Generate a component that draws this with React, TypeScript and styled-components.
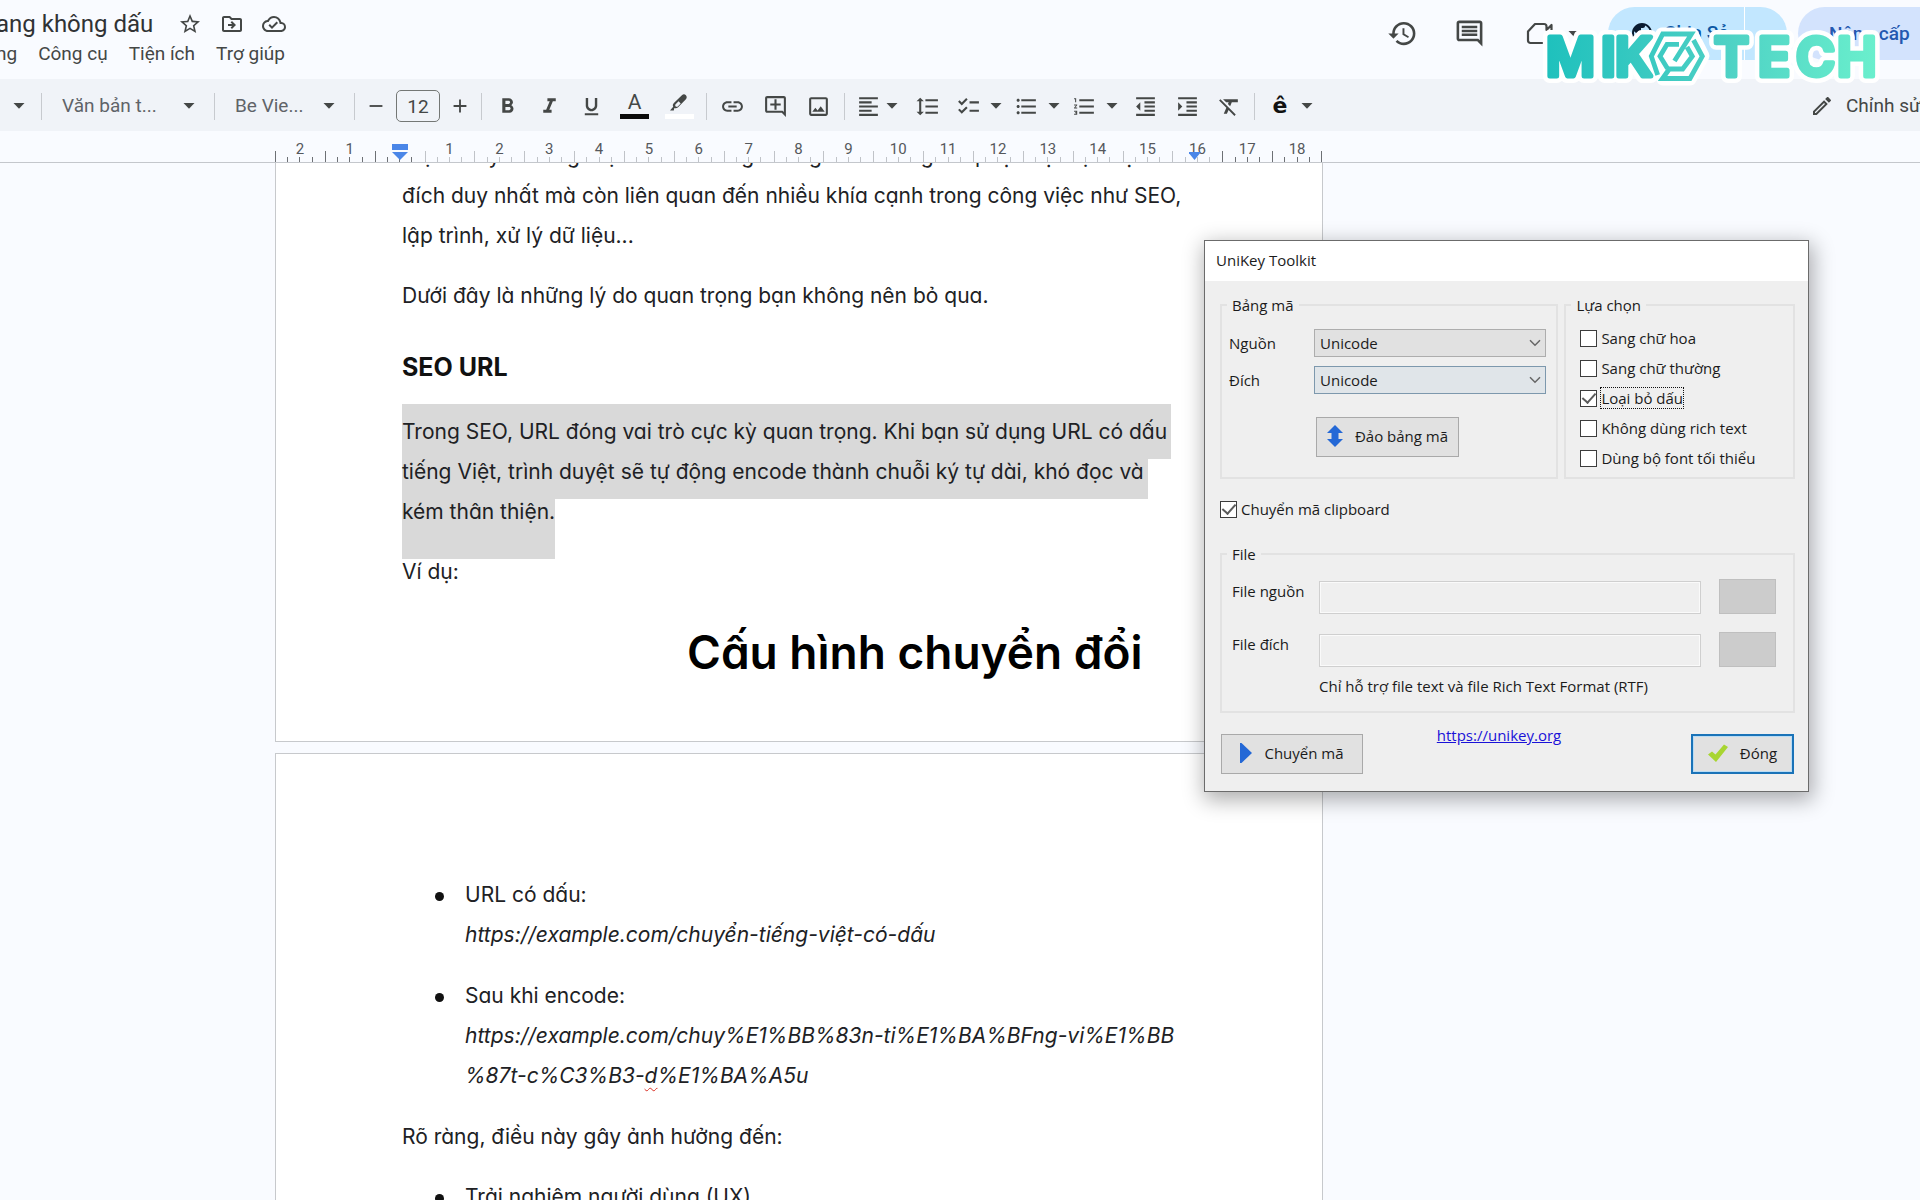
import React from 'react';
import styled, { createGlobalStyle } from 'styled-components';
import {
  MdAdd, MdChecklist, MdFormatAlignLeft, MdFormatBold, MdFormatClear, MdFormatIndentDecrease,
  MdFormatIndentIncrease, MdFormatItalic, MdFormatLineSpacing, MdFormatListBulleted,
  MdFormatListNumbered, MdFormatUnderlined, MdHistory, MdLink, MdOutlineAddComment,
  MdOutlineCloudDone, MdOutlineDriveFileMove, MdOutlineEdit, MdOutlineImage,
  MdOutlineInsertComment, MdPublic, MdRemove, MdStarBorder,
} from 'react-icons/md';

const uiFont = `Roboto, "Noto Sans", sans-serif`;
const docFont = `Inter, "Noto Sans", sans-serif`;
const dialogFont = `"Open Sans", "Noto Sans", sans-serif`;

const GlobalStyle = createGlobalStyle`
  * { box-sizing: border-box; }
  body { margin: 0; background: #f9fbff; }
  button, input, select { font: inherit; color: inherit; margin: 0; }
  button { cursor: pointer; }
  svg { flex: none; }
`;

const Shell = styled.div`
  position: relative;
  height: 100vh;
  overflow: hidden;
  display: flex;
  flex-direction: column;
  background: #f9fbff;
  color: #444746;
  font-family: ${uiFont};
`;

/* ---------- header ---------- */

const Header = styled.header`
  flex: none;
  height: 79px;
  display: flex;
  justify-content: space-between;
  overflow: hidden;
`;

const TitleBlock = styled.div`
  padding-top: 7px;
  margin-left: -4px;
`;

const TitleRow = styled.div`
  display: flex;
  align-items: center;
  height: 34px;
`;

const DocTitle = styled.h1`
  margin: 0 16px 0 0;
  font-size: 24px;
  line-height: 32px;
  font-weight: 400;
  color: #303234;
`;

const IconButton = styled.button<{ $w?: number }>`
  flex: none;
  width: ${(p) => p.$w ?? 42}px;
  height: 36px;
  padding: 0;
  border: 0;
  background: none;
  display: inline-flex;
  align-items: center;
  justify-content: center;
`;

const MenuBar = styled.nav`
  display: flex;
  gap: 21px;
`;

const MenuButton = styled.button`
  padding: 0;
  border: 0;
  background: none;
  font-size: 19px;
  line-height: 26px;
`;

const HeaderActions = styled.div`
  display: flex;
  align-items: flex-start;
  padding-top: 7px;
`;

const ActionIcons = styled.div`
  display: flex;
  align-items: center;
  height: 53px;
  gap: 25px;
  margin-right: 27px;
`;

const SharePill = styled.div`
  display: flex;
  width: 179px;
  height: 53px;
  margin-right: 11px;
  border-radius: 27px;
  overflow: hidden;
  background: #c2e7ff;
  color: #0b57a4;
`;

const ShareButton = styled.button`
  display: flex;
  align-items: center;
  gap: 10px;
  width: 137px;
  padding: 0 0 2px 22px;
  border: 0;
  border-right: 1px solid #fff;
  background: none;
  font-size: 19px;
  font-weight: 500;
`;

const ShareMore = styled.button`
  flex: 1;
  border: 0;
  background: none;
`;

const UpgradeButton = styled.button`
  width: 122px;
  height: 53px;
  padding: 0 0 0 31px;
  border: 0;
  border-radius: 27px 0 0 27px;
  background: #d3e3fd;
  color: #2458b0;
  font-size: 19px;
  font-weight: 500;
  text-align: left;
  white-space: nowrap;
`;

const Brand = styled.svg`
  position: absolute;
  top: 22px;
  right: 34px;
  width: 346px;
  height: 70px;
`;

/* ---------- toolbar ---------- */

const Toolbar = styled.div`
  flex: none;
  height: 52px;
  display: flex;
  align-items: center;
  padding-top: 2px;
  background: #f0f3f8;
`;

const Divider = styled.span`
  flex: none;
  width: 1px;
  height: 27px;
  margin: 0 4px;
  background: #c7cacf;
`;

const SelectWrap = styled.label<{ $w: number }>`
  flex: none;
  width: ${(p) => p.$w}px;
  display: flex;
  align-items: center;
  justify-content: space-between;
  padding: 0 15px 0 16px;
`;

const ToolSelect = styled.select`
  appearance: none;
  flex: 1;
  min-width: 0;
  padding: 0;
  border: 0;
  background: none;
  font-size: 19px;
  line-height: 28px;
  color: #5f6368;
`;

const SizeInput = styled.input`
  width: 44px;
  height: 32px;
  margin: 0 3px;
  padding: 0;
  border: 1px solid #747775;
  border-radius: 5px;
  background: none;
  text-align: center;
  font-size: 19px;
`;

const DropButton = styled(IconButton)`
  width: 58px;
  gap: 9px;
`;

const MeetButton = styled(DropButton)`
  margin-left: 8px;
`;

const AlignButton = styled(DropButton)`
  width: 55px;
  gap: 5px;
`;

const Swatch = styled(IconButton)`
  flex-direction: column;
  gap: 2px;
  font-size: 21px;
  line-height: 19px;
`;

const SwatchBar = styled.span<{ $color: string }>`
  width: 29px;
  height: 5px;
  background: ${(p) => p.$color};
`;

const ImeButton = styled(DropButton)`
  margin-left: 5px;
  gap: 14px;
  font: 700 22px/24px "DejaVu Sans", sans-serif;
  color: #111;
`;

const ModeButton = styled.button`
  display: flex;
  align-items: center;
  gap: 12px;
  width: 110px;
  margin-left: auto;
  padding: 0;
  border: 0;
  background: none;
  font-size: 19px;
  line-height: 28px;
  white-space: nowrap;
  overflow: hidden;
`;

/* ---------- ruler ---------- */

const RulerRow = styled.div`
  flex: none;
  height: 32px;
  padding-left: 275px;
  border-bottom: 1px solid #c4c7cc;
`;

const Ruler = styled.div`
  display: flex;
  width: 1047px;
  height: 31px;
  background: linear-gradient(#6d7074, #6d7074) 100% 100% / 1px 11px no-repeat;
`;

const RulerCell = styled.div<{ $outer: boolean }>`
  position: relative;
  flex: 1;
  padding-top: 9px;
  text-align: center;
  font-size: 15px;
  line-height: 18px;
  color: #55585c;
  --tick: ${(p) => (p.$outer ? '#6d7074' : '#c0c3c8')};
  background:
    linear-gradient(var(--tick), var(--tick)) 0 100% / 1px 11px no-repeat,
    linear-gradient(var(--tick), var(--tick)) 25% 100% / 1px 5px no-repeat,
    linear-gradient(var(--tick), var(--tick)) 50% 100% / 1px 5px no-repeat,
    linear-gradient(var(--tick), var(--tick)) 75% 100% / 1px 5px no-repeat;
`;

const Marker = styled.svg`
  position: absolute;
  left: 50%;
  bottom: 2px;
  margin-left: -8px;
  width: 16px;
  height: 16px;
`;

/* ---------- document ---------- */

const Viewport = styled.main`
  flex: 1;
  min-height: 0;
  overflow: hidden;
  padding-left: 275px;
  font-family: ${docFont};
  font-feature-settings: "cv11";
  font-size: 21px;
  line-height: 40px;
  color: #202124;
`;

const Page = styled.article`
  width: 1048px;
  border: 1px solid #c7c9cc;
  background: #fff;
  padding: 0 126px;
`;

const FirstPage = styled(Page)`
  height: 606px;
  margin-top: -27px;
  border-top: 0;
`;

const NextPage = styled(Page)`
  height: 1480px;
  margin-top: 11px;
  padding-top: 121px;
`;

const Paragraph = styled.p`
  margin: 0 0 20px;
`;

const Line = styled.span`
  display: block;
  white-space: nowrap;
`;

const Heading = styled.h2`
  margin: 31px 0 24px;
  font-size: 25px;
  line-height: 40px;
  font-weight: 700;
  color: #111;
`;

const Selected = styled.div`
  display: flex;
  flex-direction: column;
  align-items: flex-start;
`;

const SelectedLine = styled.span<{ $edge?: 'first' | 'last' }>`
  white-space: nowrap;
  background: #d9d9d9;
  box-shadow: 0 7px 0 #d9d9d9;
  padding: ${(p) => (p.$edge === 'first' ? '8px 4px 0 0' : p.$edge === 'last' ? '0 0 20px' : '0 4px 0 0')};
  margin-top: ${(p) => (p.$edge === 'first' ? '-7px' : '0')};
`;

const Bullets = styled.ul`
  margin: 0;
  padding: 0 0 0 63px;
  list-style: none;
`;

const Bullet = styled.li`
  position: relative;
  margin-bottom: 21px;
  &::before {
    content: "";
    position: absolute;
    left: -30px;
    top: 17px;
    width: 9px;
    height: 9px;
    border-radius: 50%;
    background: #111;
  }
`;

const Url = styled.em`
  display: block;
  white-space: nowrap;
`;

const Misspelt = styled.span`
  text-decoration: underline wavy #d93025 1px;
  text-underline-offset: 4px;
`;

const Caption = styled.div`
  position: absolute;
  left: 687px;
  top: 622px;
  font: 600 46px/60px ${docFont};
  font-feature-settings: "cv11";
  white-space: nowrap;
  color: #000;
`;

/* ---------- dialog ---------- */

const Dialog = styled.section`
  position: absolute;
  left: 1204px;
  top: 240px;
  width: 605px;
  border: 1px solid #6b6b6b;
  background: #efefef;
  box-shadow: 2px 6px 20px 2px rgba(0, 0, 0, 0.32);
  font-family: ${dialogFont};
  font-size: 15px;
  line-height: 20px;
  color: #1b1b1b;
`;

const DialogTitle = styled.h2`
  margin: 0;
  padding: 9px 11px 11px;
  background: #fff;
  font-size: 15px;
  line-height: 20px;
  font-weight: 400;
`;

const DialogBody = styled.div`
  padding: 14px 13px 17px 15px;
`;

const Groups = styled.div`
  display: grid;
  grid-template-columns: 339fr 231fr;
  gap: 6px;
`;

const Group = styled.fieldset`
  min-width: 0;
  margin: 0;
  padding: 0;
  border: 2px solid #e2e2e2;
`;

const Legend = styled.legend`
  margin-left: 5px;
  padding: 0 5px;
`;

const CodeGrid = styled.div`
  display: grid;
  grid-template-columns: 85px 1fr;
  row-gap: 9px;
  align-items: center;
  height: 162px;
  align-content: start;
  padding: 14px 10px 0 7px;
`;

const ComboWrap = styled.span`
  display: grid;
  align-items: center;
`;

const Combo = styled.select<{ $active?: boolean }>`
  appearance: none;
  grid-area: 1 / 1;
  height: 28px;
  padding: 0 5px;
  border: 1px solid ${(p) => (p.$active ? '#7d98ad' : '#adadad')};
  border-radius: 0;
  background: ${(p) => (p.$active ? '#e0e5e9' : '#e1e1e1')};
`;

const ComboArrow = styled.svg`
  grid-area: 1 / 1;
  justify-self: end;
  width: 12px;
  height: 8px;
  margin-right: 5px;
  pointer-events: none;
`;

const PushButton = styled.button<{ $w: number; $primary?: boolean }>`
  display: flex;
  align-items: center;
  justify-content: center;
  gap: 12px;
  width: ${(p) => p.$w}px;
  height: 40px;
  padding: 0 0 3px;
  white-space: nowrap;
  border: ${(p) => (p.$primary ? '2px solid #1a73b8' : '1px solid #a9a9a9')};
  box-shadow: ${(p) => (p.$primary ? 'inset 0 0 0 1px #b9dcf4' : 'none')};
  background: #e1e1e1;
`;

const SwapButton = styled(PushButton)`
  grid-column: 2;
  margin: 14px 0 0 2px;
`;

const Options = styled.div`
  display: flex;
  flex-direction: column;
  gap: 10px;
  padding: 13px 0 0 14px;
`;

const CheckLabel = styled.label`
  display: flex;
  align-items: center;
  gap: 4px;
`;

const CheckText = styled.span<{ $focus?: boolean }>`
  outline: ${(p) => (p.$focus ? '1px dotted #111' : 'none')};
  white-space: nowrap;
`;

const CheckBox = styled.input`
  appearance: none;
  display: grid;
  place-items: center;
  width: 17px;
  height: 17px;
  border: 1px solid #3c3c3c;
  background: #fff;
  &:checked::after {
    content: "";
    width: 6px;
    height: 11px;
    margin-top: -3px;
    border: solid #5a5a5a;
    border-width: 0 2px 2px 0;
    transform: rotate(42deg);
  }
`;

const ClipboardRow = styled.div`
  padding: 20px 0 25px;
`;

const FileGrid = styled.div`
  display: grid;
  grid-template-columns: 87px 1fr 57px;
  row-gap: 18px;
  padding: 15px 17px 15px 10px;
`;

const FileLabel = styled.label`
  padding-top: 2px;
`;

const FileInput = styled.input`
  height: 33px;
  margin-top: 2px;
  margin-right: 18px;
  border: 1px solid #cfcfcf;
  outline: 1px solid #fafafa;
  outline-offset: -2px;
  background: #efefef;
`;

const BrowseButton = styled.button`
  height: 35px;
  border: 1px solid #bfbfbf;
  background: #cccccc;
`;

const FileHint = styled.p`
  grid-column: 2 / -1;
  margin: -9px 0 0;
`;

const DialogFooter = styled.div`
  display: flex;
  justify-content: space-between;
  align-items: flex-start;
  padding: 21px 1px 0;
`;

const SiteLink = styled.a`
  margin-top: -9px;
  margin-left: -56px;
  color: #1a12d8;
`;

/* ---------- drawings ---------- */

const Caret = () => (
  <svg width="12" height="6" viewBox="0 0 12 6" aria-hidden="true">
    <path d="M0.5 0h11L6 5.8z" fill="#444746" />
  </svg>
);

const Chevron = () => (
  <ComboArrow viewBox="0 0 12 8" aria-hidden="true">
    <path d="M1 1.2l5 5 5-5" fill="none" stroke="#666" strokeWidth="1.5" />
  </ComboArrow>
);

const Highlighter = () => (
  <svg width="20" height="19" viewBox="0 0 20 19" aria-hidden="true">
    <path d="M1 17.5l3.2-3.7c-.7-1.4-.4-2.8.7-3.9l8-7.700c1.300-1.200 2.900-1.200 4 0s1.100 2.700 0 4l-7.800 8c-1.100 1.100-2.500 1.400-3.800.800L4.800 17.500z" fill="#444746" />
    <path d="M6.600 11.200l3-2.900 2.100 2.100-2.900 3c-.600.600-1.500.600-2.100 0s-.700-1.600-.100-2.200z" fill="#f0f3f8" />
  </svg>
);

const MeetIcon = () => (
  <svg width="34" height="26" viewBox="0 0 34 26" aria-hidden="true">
    <path d="M3 10.500L10 3h9c1.500 0 2.500 1 2.500 2.500V9l5-5v17l-5-5v3.500c0 1.500-1 2.500-2.500 2.500h-13.500C4 22 3 21 3 19.500z" fill="none" stroke="#444746" strokeWidth="2.200" strokeLinejoin="round" />
  </svg>
);

const logoGlyphs: [string, number][] = [
  ['M', 6], ['I', 61], ['K', 75], ['T', 174], ['E', 218], ['C', 256], ['H', 297],
];

const hexagon = (
  <>
    <path d="M117.700 53L111.300 34.300 122.700 12H151.500L134.500 39" />
    <path d="M139 22.300H127L120 34.300 127.500 46.500" />
    <path d="M153.500 18L162.300 34.300 150 56.500H122.500L129.300 47H142.700L152.300 34.300 147 25" />
  </>
);

const Logo = () => (
  <Brand viewBox="0 0 346 70" role="img" aria-label="MIKOTECH">
    <defs>
      <linearGradient id="mint" gradientUnits="userSpaceOnUse" x1="8" y1="0" x2="340" y2="0">
        <stop offset="0" stopColor="#1fc1bd" />
        <stop offset="0.5" stopColor="#4bcfc4" />
        <stop offset="1" stopColor="#6bf0cd" />
      </linearGradient>
    </defs>
    <g fontFamily="Inter, Roboto, sans-serif" fontWeight="600" fontSize="53" strokeLinejoin="round">
      <g fill="#fff" stroke="#fff" strokeWidth="14">
        {logoGlyphs.map(([ch, x]) => <text key={ch} x={x} y="54" aria-hidden="true">{ch}</text>)}
      </g>
      <path d="M111 34L122 12H152L163 34 150 57H123z" fill="#fff" stroke="#fff" strokeWidth="13" />
      <g fill="url(#mint)" stroke="url(#mint)" strokeWidth="5">
        {logoGlyphs.map(([ch, x]) => <text key={ch} x={x} y="54">{ch}</text>)}
      </g>
    </g>
    <g fill="none" stroke="url(#mint)" strokeWidth="4.800">{hexagon}</g>
  </Brand>
);

/* ---------- parts ---------- */

const rulerLabels = ['2', '1', '', ...Array.from({ length: 18 }, (_, i) => String(i + 1))];

const Tool = ({ label, children, w = 43 }: { label: string; children: React.ReactNode; w?: number }) => (
  <IconButton $w={w} aria-label={label}>{children}</IconButton>
);

const Check = ({ text, checked, focus }: { text: string; checked?: boolean; focus?: boolean }) => (
  <CheckLabel>
    <CheckBox type="checkbox" defaultChecked={checked} />
    <CheckText $focus={focus}>{text}</CheckText>
  </CheckLabel>
);

const EditorToolbar = () => (
  <Toolbar role="toolbar">
    <IconButton $w={37} aria-label="Thu phóng"><Caret /></IconButton>
    <Divider />
    <SelectWrap $w={164}>
      <ToolSelect aria-label="Kiểu"><option>Văn bản t...</option></ToolSelect>
      <Caret />
    </SelectWrap>
    <Divider />
    <SelectWrap $w={131}>
      <ToolSelect aria-label="Phông chữ"><option>Be Vie...</option></ToolSelect>
      <Caret />
    </SelectWrap>
    <Divider />
    <Tool label="Giảm cỡ chữ" w={34}><MdRemove size={22} /></Tool>
    <SizeInput aria-label="Cỡ chữ" defaultValue="12" />
    <Tool label="Tăng cỡ chữ" w={34}><MdAdd size={22} /></Tool>
    <Divider />
    <Tool label="Đậm" w={42}><MdFormatBold size={25} /></Tool>
    <Tool label="Nghiêng" w={42}><MdFormatItalic size={25} /></Tool>
    <Tool label="Gạch chân"><MdFormatUnderlined size={23} /></Tool>
    <Swatch $w={43} aria-label="Màu văn bản">A<SwatchBar $color="#0b0b0b" /></Swatch>
    <Swatch $w={46} aria-label="Màu đánh dấu"><Highlighter /><SwatchBar $color="#fff" /></Swatch>
    <Divider />
    <Tool label="Chèn liên kết"><MdLink size={25} /></Tool>
    <Tool label="Thêm nhận xét"><MdOutlineAddComment size={25} /></Tool>
    <Tool label="Chèn hình ảnh"><MdOutlineImage size={25} /></Tool>
    <Divider />
    <AlignButton aria-label="Căn chỉnh"><MdFormatAlignLeft size={25} /><Caret /></AlignButton>
    <Tool label="Giãn cách dòng" w={46}><MdFormatLineSpacing size={25} /></Tool>
    <DropButton aria-label="Danh sách kiểm"><MdChecklist size={25} /><Caret /></DropButton>
    <DropButton aria-label="Danh sách dấu đầu dòng"><MdFormatListBulleted size={25} /><Caret /></DropButton>
    <DropButton aria-label="Danh sách đánh số"><MdFormatListNumbered size={25} /><Caret /></DropButton>
    <Tool label="Giảm lề" w={42}><MdFormatIndentDecrease size={25} /></Tool>
    <Tool label="Tăng lề" w={42}><MdFormatIndentIncrease size={25} /></Tool>
    <Tool label="Xóa định dạng" w={42}><MdFormatClear size={25} /></Tool>
    <Divider />
    <ImeButton aria-label="Công cụ nhập">ê<Caret /></ImeButton>
    <ModeButton><MdOutlineEdit size={24} />Chỉnh sửa</ModeButton>
  </Toolbar>
);

const UniKeyDialog = () => (
  <Dialog role="dialog" aria-labelledby="unikey-title">
    <DialogTitle id="unikey-title">UniKey Toolkit</DialogTitle>
    <DialogBody>
      <Groups>
        <Group>
          <Legend>Bảng mã</Legend>
          <CodeGrid>
            <label htmlFor="src">Nguồn</label>
            <ComboWrap><Combo id="src"><option>Unicode</option></Combo><Chevron /></ComboWrap>
            <label htmlFor="dst">Đích</label>
            <ComboWrap><Combo id="dst" $active><option>Unicode</option></Combo><Chevron /></ComboWrap>
            <SwapButton $w={143}>
              <svg width="16" height="22" viewBox="0 0 16 22" aria-hidden="true">
                <path d="M8 0l8 8h-4.500v6H16l-8 8-8-8h4.500V8H0z" fill="#2468d6" />
              </svg>
              Đảo bảng mã
            </SwapButton>
          </CodeGrid>
        </Group>
        <Group>
          <Legend>Lựa chọn</Legend>
          <Options>
            <Check text="Sang chữ hoa" />
            <Check text="Sang chữ thường" />
            <Check text="Loại bỏ dấu" checked focus />
            <Check text="Không dùng rich text" />
            <Check text="Dùng bộ font tối thiểu" />
          </Options>
        </Group>
      </Groups>
      <ClipboardRow><Check text="Chuyển mã clipboard" checked /></ClipboardRow>
      <Group>
        <Legend>File</Legend>
        <FileGrid>
          <FileLabel htmlFor="file-src">File nguồn</FileLabel>
          <FileInput id="file-src" disabled />
          <BrowseButton aria-label="Chọn file nguồn" disabled />
          <FileLabel htmlFor="file-dst">File đích</FileLabel>
          <FileInput id="file-dst" disabled />
          <BrowseButton aria-label="Chọn file đích" disabled />
          <FileHint>Chỉ hỗ trợ file text và file Rich Text Format (RTF)</FileHint>
        </FileGrid>
      </Group>
      <DialogFooter>
        <PushButton $w={142}>
          <svg width="12" height="20" viewBox="0 0 12 20" aria-hidden="true">
            <path d="M0 0h1.500L12 10 1.500 20H0z" fill="#2468d6" />
          </svg>
          Chuyển mã
        </PushButton>
        <SiteLink href="https://unikey.org">https://unikey.org</SiteLink>
        <PushButton $w={103} $primary>
          <svg width="20" height="18" viewBox="0 0 20 18" aria-hidden="true">
            <path d="M0 10.500l4-3 3.500 3L16 .500 20 3 8 18z" fill="#a8d531" />
          </svg>
          Đóng
        </PushButton>
      </DialogFooter>
    </DialogBody>
  </Dialog>
);

export default function App() {
  return (
    <Shell>
      <GlobalStyle />
      <Header>
        <TitleBlock>
          <TitleRow>
            <DocTitle>ang không dấu</DocTitle>
            <Tool label="Gắn dấu sao" w={42}><MdStarBorder size={24} /></Tool>
            <Tool label="Di chuyển" w={42}><MdOutlineDriveFileMove size={24} /></Tool>
            <Tool label="Trạng thái tài liệu" w={42}><MdOutlineCloudDone size={24} /></Tool>
          </TitleRow>
          <MenuBar>
            <MenuButton>ng</MenuButton>
            <MenuButton>Công cụ</MenuButton>
            <MenuButton>Tiện ích</MenuButton>
            <MenuButton>Trợ giúp</MenuButton>
          </MenuBar>
        </TitleBlock>
        <HeaderActions>
          <ActionIcons>
            <Tool label="Lịch sử" w={42}><MdHistory size={31} /></Tool>
            <Tool label="Nhận xét" w={42}><MdOutlineInsertComment size={31} /></Tool>
            <MeetButton aria-label="Cuộc gọi"><MeetIcon /><Caret /></MeetButton>
          </ActionIcons>
          <SharePill>
            <ShareButton><MdPublic size={24} color="#0a1b30" />Chia Sẻ</ShareButton>
            <ShareMore aria-label="Tùy chọn chia sẻ" />
          </SharePill>
          <UpgradeButton>Nâng cấp</UpgradeButton>
        </HeaderActions>
      </Header>
      <EditorToolbar />
      <RulerRow>
        <Ruler>
          {rulerLabels.map((label, i) => (
            <RulerCell key={i} $outer={i < 3 || i > 18}>
              {label}
              {i === 2 && (
                <Marker viewBox="0 0 16 16" aria-hidden="true">
                  <path d="M0 0h16v6H0zM0 8h16l-8 8z" fill="#4a86e8" />
                </Marker>
              )}
              {i === 18 && (
                <Marker viewBox="0 0 16 16" aria-hidden="true">
                  <path d="M-1 8h13l-6.500 8z" fill="#4a86e8" />
                </Marker>
              )}
            </RulerCell>
          ))}
        </Ruler>
      </RulerRow>
      <Viewport>
        <FirstPage>
          <Paragraph>
            <Line>Việc chuyển tiếng Việt có dấu sang không dấu không chỉ phục vụ một mục</Line>
            <Line>đích duy nhất mà còn liên quan đến nhiều khía cạnh trong công việc như SEO,</Line>
            <Line>lập trình, xử lý dữ liệu...</Line>
          </Paragraph>
          <Paragraph>Dưới đây là những lý do quan trọng bạn không nên bỏ qua.</Paragraph>
          <Heading>SEO URL</Heading>
          <Selected>
            <SelectedLine $edge="first">Trong SEO, URL đóng vai trò cực kỳ quan trọng. Khi bạn sử dụng URL có dấu</SelectedLine>
            <SelectedLine>tiếng Việt, trình duyệt sẽ tự động encode thành chuỗi ký tự dài, khó đọc và</SelectedLine>
            <SelectedLine $edge="last">kém thân thiện.</SelectedLine>
          </Selected>
          <Paragraph>Ví dụ:</Paragraph>
        </FirstPage>
        <NextPage>
          <Bullets>
            <Bullet>
              URL có dấu:
              <Url>https://example.com/chuyển-tiếng-việt-có-dấu</Url>
            </Bullet>
            <Bullet>
              Sau khi encode:
              <Url>https://example.com/chuy%E1%BB%83n-ti%E1%BA%BFng-vi%E1%BB</Url>
              <Url>%87t-c%C3%B3-<Misspelt>d</Misspelt>%E1%BA%A5u</Url>
            </Bullet>
          </Bullets>
          <Paragraph>Rõ ràng, điều này gây ảnh hưởng đến:</Paragraph>
          <Bullets>
            <Bullet>Trải nghiệm người dùng (UX)</Bullet>
          </Bullets>
        </NextPage>
      </Viewport>
      <Caption>Cấu hình chuyển đổi</Caption>
      <UniKeyDialog />
      <Logo />
    </Shell>
  );
}
